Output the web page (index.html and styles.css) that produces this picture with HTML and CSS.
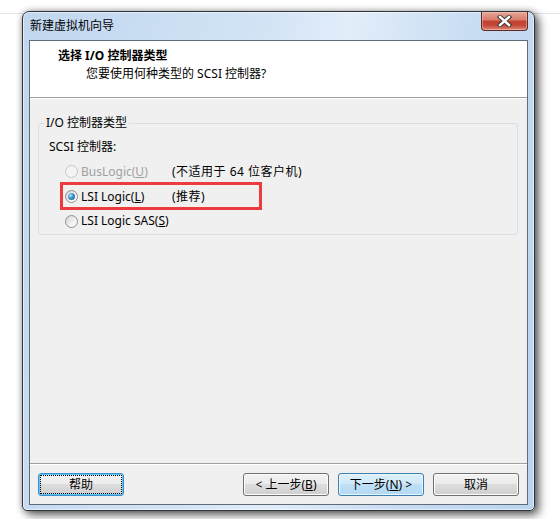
FILE: index.html
```html
<!DOCTYPE html>
<html>
<head>
    <title>新建虚拟机向导</title>
    <link rel="stylesheet" href="styles.css">
</head>
<body>
    <div class="window">
        <div class="titlebar">
            <span class="caption">新建虚拟机向导</span>
            <div class="close-btn">
                <svg width="15" height="12" viewBox="0 0 15 12">
                    <path d="M3 2 L12 10 M12 2 L3 10" stroke="#3b3b3b" stroke-width="4.4" stroke-linecap="square" fill="none"/>
                    <path d="M3 2 L12 10 M12 2 L3 10" stroke="#ffffff" stroke-width="2.4" stroke-linecap="square" fill="none"/>
                </svg>
            </div>
        </div>

        <div class="client">
            <div class="header">
                <div class="header-title">选择 I/O 控制器类型</div>
                <div class="header-sub">您要使用何种类型的 SCSI 控制器?</div>
            </div>

            <div class="content">
                <fieldset class="group">
                    <legend>I/O 控制器类型</legend>
                    <div class="field-label">SCSI 控制器:</div>
                    <div class="option disabled">
                        <span class="radio"></span>
                        <span class="name">BusLogic(<u>U</u>)</span>
                        <span class="note">(不适用于 64 位客户机)</span>
                    </div>
                    <div class="option">
                        <span class="radio checked"></span>
                        <span class="name">LSI Logic(<u>L</u>)</span>
                        <span class="note">(推荐)</span>
                        <div class="highlight"></div>
                    </div>
                    <div class="option last">
                        <span class="radio"></span>
                        <span class="name">LSI Logic SAS(<u>S</u>)</span>
                    </div>
                </fieldset>
            </div>

            <div class="footer">
                <div class="btn btn-help">帮助</div>
                <div class="btn">&lt; 上一步(<u>B</u>)</div>
                <div class="btn btn-default">下一步(<u>N</u>) &gt;</div>
                <div class="btn">取消</div>
            </div>
        </div>
    </div>
</body>
</html>
```

FILE: styles.css
```css
body {
    margin: 0;
    padding: 11px 0 0 22px;
    height: 519px;
    box-sizing: border-box;
    overflow: hidden;
    font-family: "Noto Sans", "Noto Sans CJK SC", sans-serif;
    font-size: 12px;
    color: #000;
    background: #fff linear-gradient(to bottom, transparent 13px, #dde4ec 13px, #dde4ec 14px, transparent 14px);
}

.window {
    width: 513px;
    height: 500px;
    box-sizing: border-box;
    border: 1px solid #2f3438;
    border-radius: 7px 7px 5px 5px;
    background: linear-gradient(100deg, #c0d7ef 0%, #d2e3f5 40%, #e2edf9 55%, #c9ddf3 75%, #bad4f0 100%);
    box-shadow: 4px 4px 10px rgba(0, 0, 0, 0.6), 0 0 6px rgba(0, 0, 0, 0.3), inset 0 0 0 1px rgba(255, 255, 255, 0.55);
    display: flex;
    flex-direction: column;
}

.titlebar {
    height: 28px;
    flex-shrink: 0;
    display: flex;
}

.caption {
    margin: 6px 0 0 7px;
    line-height: 16px;
}

.close-btn {
    margin-left: auto;
    margin-right: 6px;
    width: 47px;
    height: 19px;
    box-sizing: border-box;
    border: 1px solid #5b2a24;
    border-top: none;
    border-radius: 0 0 4px 4px;
    background: linear-gradient(#e9a797 0%, #d77b69 45%, #c0402f 50%, #c44a3a 75%, #dd8a78 100%);
    box-shadow: inset 0 0 0 1px rgba(255, 210, 200, 0.45);
    display: flex;
    align-items: center;
    justify-content: center;
}

.client {
    flex: 1;
    margin: 0 6px 5px;
    border: 1px solid #5f6b78;
    background: #f0f0f0;
    display: flex;
    flex-direction: column;
}

.header {
    height: 57px;
    box-sizing: border-box;
    flex-shrink: 0;
    padding: 7px 0 0 28px;
    background: #fff;
    border-bottom: 1px solid #a0a0a0;
    box-shadow: 0 1px #fff;
}

.header-title {
    font-weight: bold;
    line-height: 16px;
}

.header-sub {
    line-height: 16px;
    margin-top: 2px;
    padding-left: 28px;
}

.content {
    flex: 1;
    padding: 17px 9px 0 8px;
}

.group {
    margin: 0;
    min-width: 0;
    padding: 8px 10px 1px 10px;
    border: 1px solid #d5dfe5;
    border-radius: 3px;
}

.group legend {
    padding: 0 2px;
    margin-left: -5px;
    line-height: 16px;
}

.field-label {
    line-height: 16px;
    margin-bottom: 4px;
}

.option {
    position: relative;
    display: flex;
    align-items: center;
    height: 25px;
    padding-left: 16px;
}

.option.last {
    height: 24px;
}

.radio {
    width: 13px;
    height: 13px;
    box-sizing: border-box;
    flex-shrink: 0;
    margin-right: 3px;
    border: 1px solid #8e8f8f;
    border-radius: 50%;
    background: linear-gradient(135deg, #d4d4d4, #f6f6f6 70%, #fff);
    display: flex;
    align-items: center;
    justify-content: center;
}

.radio.checked::before {
    content: "";
    width: 7px;
    height: 7px;
    border-radius: 50%;
    background: radial-gradient(circle at 35% 35%, #b9e3fb 0%, #3b8fc9 45%, #1c5a88 100%);
}

.name {
    width: 91px;
    line-height: 16px;
}

.note {
    line-height: 16px;
    letter-spacing: 0.5px;
}

.disabled .name {
    color: #a0a0a0;
}

.disabled .radio {
    border-color: #c6c6c6;
    background: #f4f4f4;
}

.highlight {
    position: absolute;
    left: 11px;
    top: -2px;
    width: 202px;
    height: 28px;
    box-sizing: border-box;
    border: 3px solid #ef3b3b;
}

.footer {
    height: 41px;
    box-sizing: border-box;
    flex-shrink: 0;
    padding: 9px 8px 0;
    border-top: 1px solid #a0a0a0;
    box-shadow: inset 0 1px #fff;
    display: flex;
    gap: 9px;
}

.btn {
    width: 86px;
    height: 23px;
    box-sizing: border-box;
    border: 1px solid #707070;
    border-radius: 3px;
    background: linear-gradient(#f2f2f2, #ebebeb 50%, #dddddd 50%, #cfcfcf);
    box-shadow: inset 0 0 0 1px #fcfcfc;
    display: flex;
    align-items: center;
    justify-content: center;
    line-height: 16px;
}

.btn-help {
    margin-right: auto;
    border-color: #3c8fcf;
    box-shadow: inset 0 0 0 1px #62c6f4;
    outline: 1px dotted #000;
    outline-offset: -3px;
}

.btn-default {
    border-color: #3c7fb1;
    background: linear-gradient(#dcf0fb, #cfe8f8 50%, #bfe0f6 50%, #b4d9f3);
    box-shadow: inset 0 0 0 1px #e8f6fd;
}
```
